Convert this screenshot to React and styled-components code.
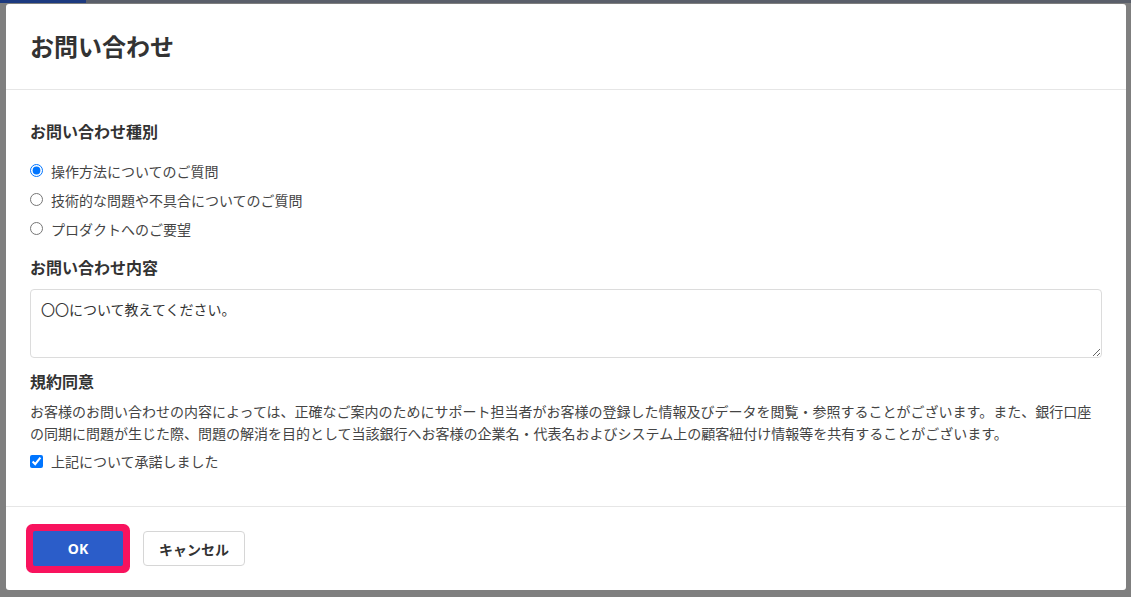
import React, { useState } from 'react';
import styled, { createGlobalStyle } from 'styled-components';

const GlobalStyle = createGlobalStyle`
  html, body {
    margin: 0;
    padding: 0;
    background: #7f7f7f;
  }
  body {
    font-family: "Noto Sans CJK JP", "Noto Sans", sans-serif;
    color: #333;
  }
`;

const KIND_OPTIONS = [
  '操作方法についてのご質問',
  '技術的な問題や不具合についてのご質問',
  'プロダクトへのご要望',
];

function App() {
  const [kind, setKind] = useState(0);
  const [agreed, setAgreed] = useState(true);
  const [content, setContent] = useState('〇〇について教えてください。');

  return (
    <>
      <GlobalStyle />
      <Backdrop>
        <TopStrip />
        <Modal>
          <Header>
            <Title>お問い合わせ</Title>
          </Header>
          <Body>
            <SectionTitle>お問い合わせ種別</SectionTitle>
            <RadioGroup>
              {KIND_OPTIONS.map((label, i) => (
                <OptionRow key={label}>
                  <input
                    type="radio"
                    name="kind"
                    checked={kind === i}
                    onChange={() => setKind(i)}
                  />
                  <span>{label}</span>
                </OptionRow>
              ))}
            </RadioGroup>

            <SectionTitle $gap={12}>お問い合わせ内容</SectionTitle>
            <TextArea value={content} onChange={(e) => setContent(e.target.value)} />

            <SectionTitle $gap={11}>規約同意</SectionTitle>
            <Terms>
              お客様のお問い合わせの内容によっては、正確なご案内のためにサポート担当者がお客様の登録した情報及びデータを閲覧・参照することがございます。また、銀行口座の同期に問題が生じた際、問題の解消を目的として当該銀行へお客様の企業名・代表名およびシステム上の顧客紐付け情報等を共有することがございます。
            </Terms>
            <OptionRow $check>
              <input
                type="checkbox"
                checked={agreed}
                onChange={(e) => setAgreed(e.target.checked)}
              />
              <span>上記について承諾しました</span>
            </OptionRow>
          </Body>
          <Footer>
            <PrimaryButton type="button">OK</PrimaryButton>
            <SecondaryButton type="button">キャンセル</SecondaryButton>
          </Footer>
        </Modal>
      </Backdrop>
    </>
  );
}

const Backdrop = styled.div`
  position: relative;
  width: 1131px;
  height: 597px;
  overflow: hidden;
  background: #7f7f7f;
  padding: 4px 0 0 6px;
  box-sizing: border-box;
`;

const TopStrip = styled.div`
  position: absolute;
  top: 0;
  left: 0;
  right: 0;
  height: 3px;
  background: linear-gradient(to right, #1d3a80 0, #1d3a80 86px, #5a5f6a 86px);
`;

const Modal = styled.div`
  width: 1120px;
  height: 586px;
  background: #fff;
  border-radius: 3px;
  display: flex;
  flex-direction: column;
`;

const Header = styled.div`
  height: 85px;
  flex: none;
  display: flex;
  align-items: center;
  padding: 0 24px;
  border-bottom: 1px solid #e6e6e6;
`;

const Title = styled.h1`
  margin: 0;
  font-size: 24px;
  line-height: 1;
  font-weight: 700;
  color: #333;
  padding-bottom: 2px;
`;

const Body = styled.div`
  flex: none;
  height: 417px;
  box-sizing: border-box;
  padding: 29px 24px 0;
  border-bottom: 1px solid #e6e6e6;
`;

const SectionTitle = styled.h2`
  margin: ${(p) => p.$gap || 0}px 0 0;
  font-size: 16px;
  line-height: 24px;
  font-weight: 700;
  color: #333;
`;

const RadioGroup = styled.div`
  margin-top: 13px;
  display: flex;
  flex-direction: column;
`;

const OptionRow = styled.label`
  display: flex;
  align-items: center;
  height: ${(p) => (p.$check ? 22 : 29)}px;
  margin-top: ${(p) => (p.$check ? 6 : 0)}px;
  font-size: 14px;
  color: #444;
  cursor: pointer;

  input {
    width: 13px;
    height: 13px;
    margin: 0 8px 0 0;
    accent-color: #0075ff;
  }
`;

const TextArea = styled.textarea`
  display: block;
  box-sizing: border-box;
  width: 100%;
  height: 69px;
  margin-top: 10px;
  padding: 9px 10px;
  border: 1px solid #dcdcdc;
  border-radius: 4px;
  font-family: "Noto Sans CJK JP", "Noto Sans", sans-serif;
  font-size: 14px;
  line-height: 20px;
  color: #333;
  resize: vertical;
  outline: none;
`;

const Terms = styled.p`
  margin: 7px 0 0;
  font-size: 14px;
  line-height: 22px;
  color: #444;
`;

const Footer = styled.div`
  flex: 1;
  display: flex;
  align-items: center;
  gap: 20px;
  padding: 0 27px;
`;

const PrimaryButton = styled.button`
  width: 90px;
  height: 35px;
  border: none;
  border-radius: 2px;
  background: #2b5dc9;
  color: #fff;
  font-family: "Noto Sans", "Noto Sans CJK JP", sans-serif;
  font-size: 14px;
  font-weight: 700;
  box-shadow: 0 0 0 7px #f8135e;
  cursor: pointer;
`;

const SecondaryButton = styled.button`
  width: 102px;
  height: 35px;
  border: 1px solid #d6d6d6;
  border-radius: 4px;
  background: #fff;
  color: #333;
  font-family: "Noto Sans CJK JP", "Noto Sans", sans-serif;
  font-size: 14px;
  font-weight: 700;
  cursor: pointer;
`;

export default App;
